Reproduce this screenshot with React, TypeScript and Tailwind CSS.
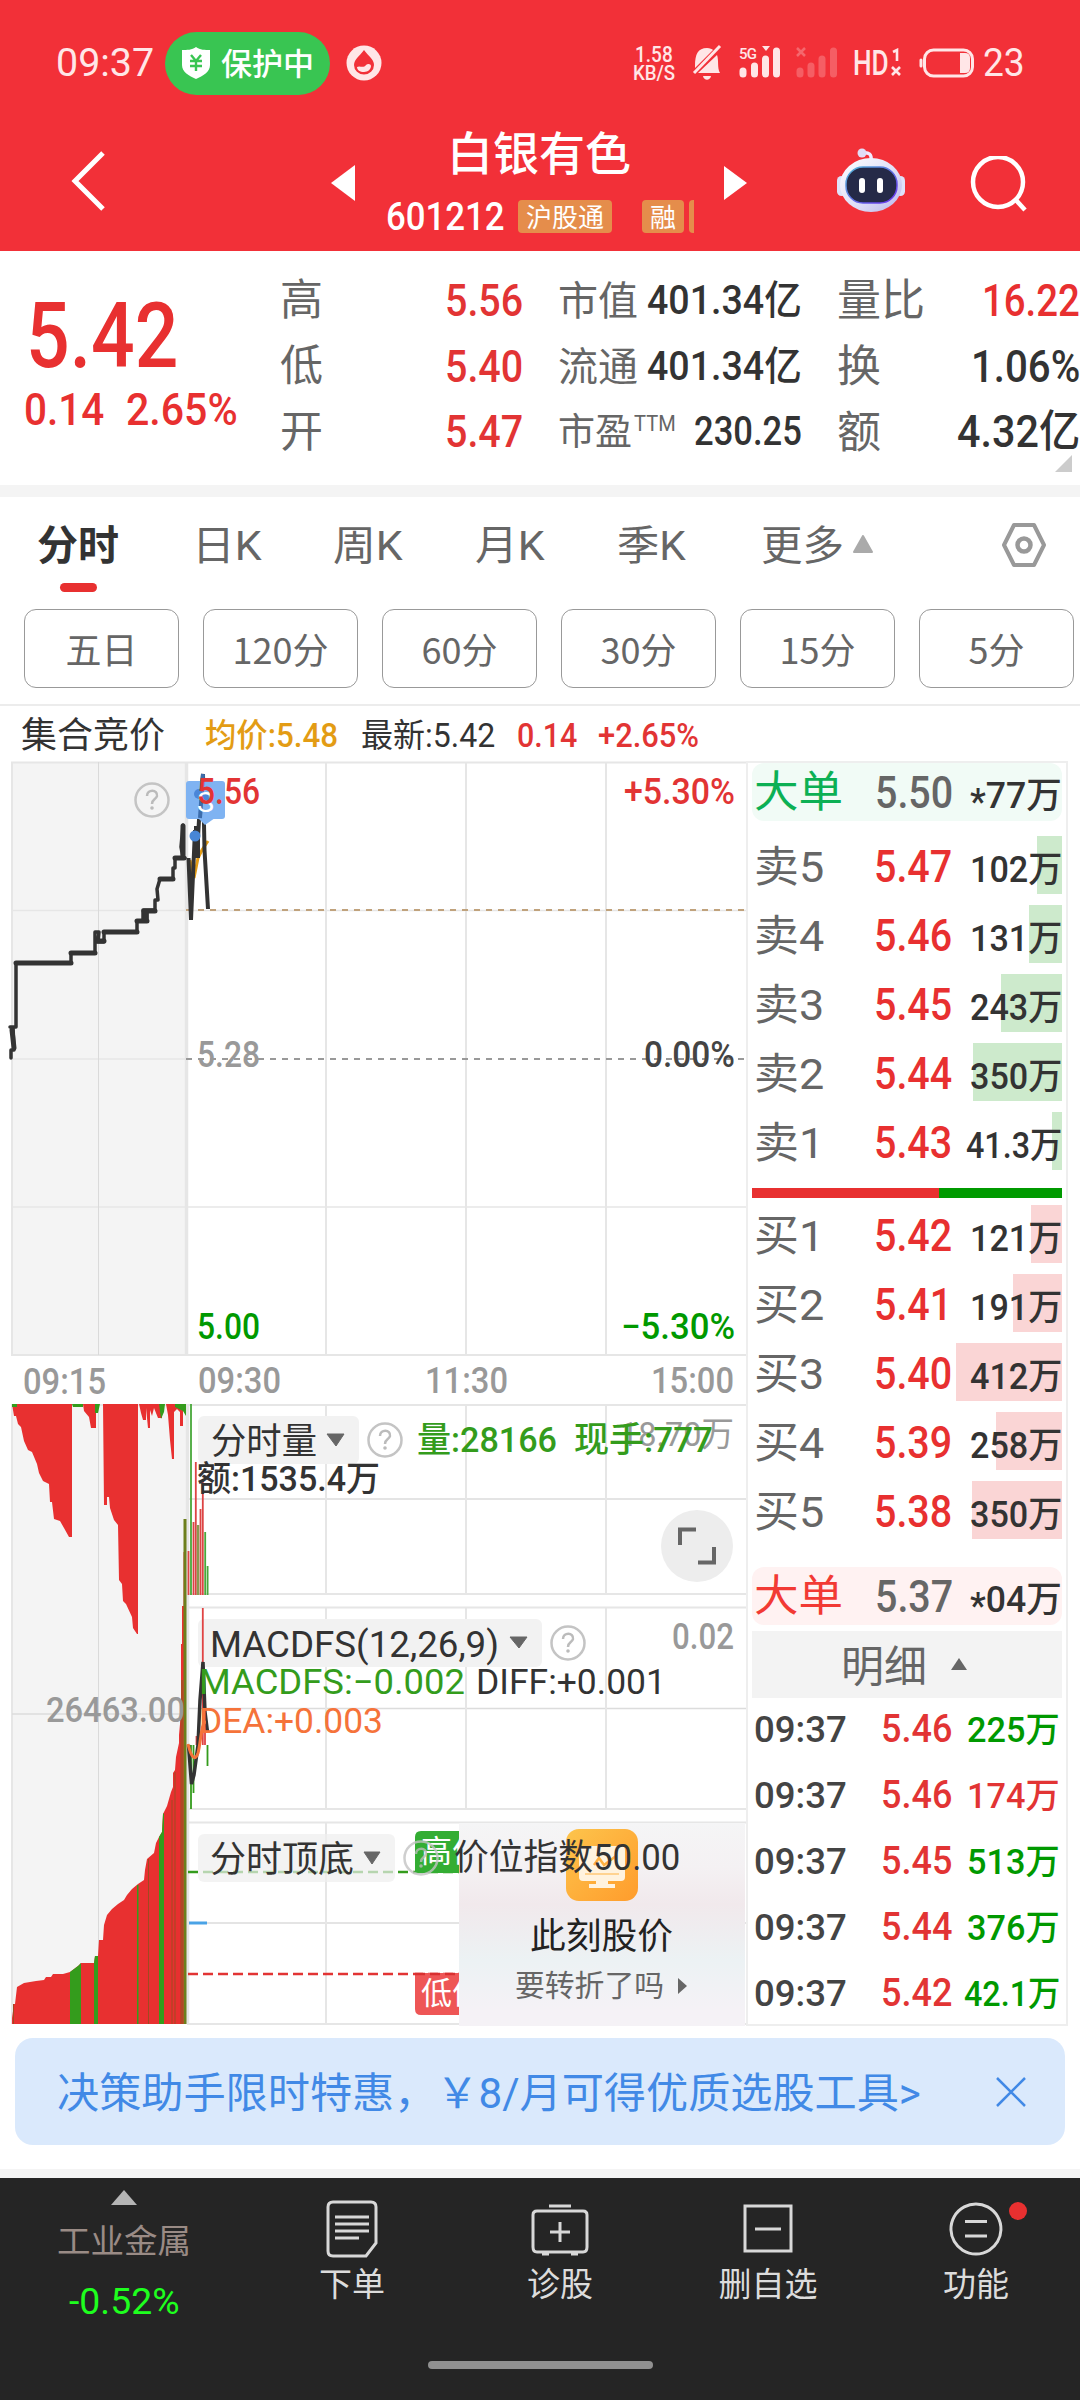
import { useLayoutEffect, useRef, type ReactNode } from "react";

// squeezes or stretches one line of text to the width of its box
function Fit({ className, children }: { className: string; children: ReactNode }) {
  const box = useRef<HTMLSpanElement>(null);
  const inner = useRef<HTMLSpanElement>(null);

  useLayoutEffect(() => {
    if (!box.current || !inner.current) return;
    inner.current.style.transform = `scaleX(${box.current.clientWidth / inner.current.offsetWidth})`;
  }, [children]);

  return (
    <span
      ref={box}
      className={`block shrink-0 whitespace-nowrap font-[family-name:Roboto,'Noto_Sans_CJK_SC',sans-serif] ${className}`}
    >
      <span ref={inner} className="inline-block origin-left">
        {children}
      </span>
    </span>
  );
}

function StatusBar() {
  return (
    <div className="flex h-[126px] items-center text-[#ffe6e7]">
      <Fit className="ml-[56px] w-[98px] pt-px text-[39px]">09:37</Fit>
      <div className="ml-[11px] flex h-[63px] w-[165px] items-center rounded-full bg-[#39c552] pl-4 text-white">
        <svg width="30" height="32" viewBox="0 0 30 32">
          <path d="M15 0 C19 3 24 3 29 3 V18 C29 25 22 29 15 32 C8 29 1 25 1 18 V3 C6 3 11 3 15 0Z" fill="#fff" />
          <path d="M10 8 L15 14 L20 8 M9 14 H21 M9 19 H21 M15 14 V24" stroke="#39c552" strokeWidth="2.4" fill="none" />
        </svg>
        <span className="ml-[10px] pb-1 text-[31px] leading-none font-medium">保护中</span>
      </div>
      <svg className="ml-4" width="36" height="36" viewBox="0 0 36 36">
        <circle cx="18" cy="18" r="17.5" fill="#ffe6e7" />
        <path d="M18 5 C22 11 28 14 28 20 A10 9.5 0 0 1 8 20 C8 14 14 11 18 5Z" fill="#f23038" />
        <path d="M11 22 C14 20 17 24 20 20 C22 18 25 19 25 21 C25 24 22 27 18 27 C14 27 11 25 11 22Z" fill="#ffe6e7" />
      </svg>

      <div className="ml-[251px] flex w-[44px] flex-col pt-px leading-[18px]">
        <Fit className="ml-[2px] w-[38px] text-[22px] font-medium">1.58</Fit>
        <Fit className="w-[42px] text-[20px] font-medium">KB/S</Fit>
      </div>
      <svg className="ml-[15px]" width="30" height="38" viewBox="0 0 30 38">
        <path d="M3 22 C3 10 6 4 15 4 C18 4 20 5 21 6 L3 24Z M25 11 C27 16 25 24 28 29 H6Z" fill="#ffe6e7" />
        <path d="M2 29 L28 2" stroke="#ffe6e7" strokeWidth="3" />
        <path d="M11 32 H19 C18 37 12 37 11 32Z" fill="#ffe6e7" />
      </svg>
      <svg className="ml-[17px]" width="100" height="34" viewBox="0 0 100 34">
        <text x="0" y="13" fontSize="15" fontWeight="500" fontFamily="Roboto, sans-serif" textLength="18" fill="#ffe6e7">5G</text>
        <path d="M23 0 H31 L27 5Z" fill="#ffe6e7" />
        <g stroke="#ffe6e7" strokeWidth="7" strokeLinecap="round">
          <path d="M4 25 V28 M15.500 20 V28 M26.500 13 V28 M37.500 5 V28" />
          <path d="M61 25 V28 M72 20 V28 M83 13 V28 M94.500 5 V28" opacity=".25" />
        </g>
        <path d="M58 2 L66 10 M66 2 L58 10" stroke="#ffe6e7" strokeWidth="2.500" opacity=".3" />
      </svg>
      <Fit className="ml-[14px] w-[36px] pt-[2px] text-[35px] font-medium">HD</Fit>
      <svg className="ml-[2px]" width="12" height="30" viewBox="0 0 12 30">
        <path d="M2 4 L6 2 V13 M1 19 L9 27 M9 19 L1 27" stroke="#ffe6e7" strokeWidth="2.600" fill="none" />
      </svg>
      <svg className="ml-[15px]" width="58" height="30" viewBox="0 0 58 30">
        <rect x="6.500" y="2" width="48" height="26" rx="9" fill="none" stroke="#ffe6e7" strokeWidth="3" />
        <path d="M42 5 H47 Q52 5 52 10 V20 Q52 25 47 25 H42Z" fill="#ffe6e7" />
        <path d="M3 12 V18" stroke="#ffe6e7" strokeWidth="3" strokeLinecap="round" />
      </svg>
      <Fit className="ml-[7px] w-[42px] pt-px text-[38px]">23</Fit>
    </div>
  );
}

function Robot() {
  return (
    <svg width="70" height="66" viewBox="0 0 70 66">
      <defs>
        <linearGradient id="shell" x1="0" y1="0" x2="1" y2="1">
          <stop offset="0" stopColor="#fff" />
          <stop offset=".6" stopColor="#dcdcf6" />
          <stop offset="1" stopColor="#b9b4ea" />
        </linearGradient>
        <linearGradient id="rim" x1="0" y1="0" x2="1" y2="1">
          <stop offset="0" stopColor="#56b8d8" />
          <stop offset="1" stopColor="#6a2df0" />
        </linearGradient>
      </defs>
      <path d="M26 5 C33 4 36 6 35 13" stroke="#f3eaff" strokeWidth="3.500" fill="none" />
      <circle cx="26" cy="5" r="4.500" fill="#e2dcf6" />
      <rect x="1" y="28" width="9" height="20" rx="4.500" fill="#dfe2fa" />
      <rect x="60" y="28" width="9" height="20" rx="4.500" fill="#dfe2fa" />
      <ellipse cx="35" cy="37" rx="31" ry="27" fill="url(#shell)" />
      <rect x="10" y="19" width="51" height="36" rx="17" fill="#252a48" stroke="url(#rim)" strokeWidth="1.500" />
      <rect x="23" y="30" width="6" height="15" rx="3" fill="#fff" />
      <rect x="41" y="30" width="6" height="15" rx="3" fill="#fff" />
    </svg>
  );
}

function Header() {
  return (
    <header className="h-[251px] bg-[#f23038] text-white">
      <StatusBar />
      <div className="flex h-[125px]">
        <svg className="mt-6 ml-[70px]" width="38" height="64" viewBox="0 0 38 64">
          <path d="M33 3 L5 31 L33 59" stroke="#fff" strokeWidth="5" fill="none" />
        </svg>
        <svg className="mt-[38px] ml-[223px]" width="24" height="38" viewBox="0 0 24 38">
          <path d="M0 19 L24 1 V37Z" fill="#fff" />
        </svg>
        <div className="ml-[31px] flex w-[310px] flex-col">
          <div className="ml-[61px] text-[46px] leading-[48px] font-medium">白银有色</div>
          <div className="mt-[26px] flex h-[33px] items-center">
            <Fit className="w-[119px] pt-[2px] text-[38px] leading-[33px] font-medium">601212</Fit>
            <span className="ml-[13px] h-[33px] w-[94px] rounded bg-[#e58d4b] text-center text-[26px] leading-[31px]">沪股通</span>
            <span className="ml-[30px] h-[33px] w-[42px] rounded bg-[#e58d4b] text-center text-[26px] leading-[31px]">融</span>
            <span className="ml-[5px] h-[33px] w-[5px] rounded-l bg-[#e58d4b]" />
          </div>
        </div>
        <svg className="mt-[39px] ml-[28px]" width="24" height="36" viewBox="0 0 24 36">
          <path d="M0 1 L23 18 L0 35Z" fill="#fff" />
        </svg>
        <div className="mt-[22px] ml-[88px]">
          <Robot />
        </div>
        <svg className="mt-[30px] ml-[63px]" width="60" height="60" viewBox="0 0 60 60">
          <circle cx="29" cy="26" r="25" stroke="#fff" strokeWidth="4.500" fill="none" />
          <path d="M46 43 L56 54" stroke="#fff" strokeWidth="4.500" />
        </svg>
      </div>
    </header>
  );
}

const rowCls = "flex h-[66px] items-center justify-between";

function Stats() {
  return (
    <section className="flex h-[234px] bg-white pt-4 text-[#666]">
      <div className="w-[280px] text-[#e83030]">
        <Fit className="mt-[22px] ml-[26px] w-[152px] text-[90px] leading-[96px] font-medium">5.42</Fit>
        <div className="mt-[1px] flex leading-[48px]">
          <Fit className="ml-[24px] w-[80px] text-[44px] font-medium">0.14</Fit>
          <Fit className="ml-[22px] w-[112px] text-[44px] font-medium">2.65%</Fit>
        </div>
      </div>
      <div className="w-[243px] text-[43px]">
        <div className={rowCls}>
          <span className="pb-[7px]">高</span>
          <Fit className="w-[78px] pt-px text-[45px] font-medium text-[#e23434]">5.56</Fit>
        </div>
        <div className={rowCls}>
          <span className="pb-[7px]">低</span>
          <Fit className="w-[78px] pt-px text-[45px] font-medium text-[#e23434]">5.40</Fit>
        </div>
        <div className={rowCls}>
          <span className="pb-[7px]">开</span>
          <Fit className="w-[78px] text-[45px] font-medium text-[#e23434]">5.47</Fit>
        </div>
      </div>
      <div className="ml-[35px] w-[244px] text-[40px]">
        <div className={rowCls}>
          <span className="pb-1">市值</span>
          <Fit className="w-[155px] pt-[2px] text-[40px] font-medium text-[#333]">401.34亿</Fit>
        </div>
        <div className={rowCls}>
          <span className="pb-1">流通</span>
          <Fit className="w-[155px] pt-[2px] text-[40px] font-medium text-[#333]">401.34亿</Fit>
        </div>
        <div className={rowCls}>
          <span className="flex pb-[5px] text-[37px]">
            市盈
            <Fit className="mt-[5px] ml-[2px] w-[42px] text-[22px]">TTM</Fit>
          </span>
          <Fit className="w-[108px] text-[40px] font-medium text-[#333]">230.25</Fit>
        </div>
      </div>
      <div className="relative ml-[35px] w-[243px] text-[44px]">
        <div className={rowCls}>
          <span className="pb-[6px]">量比</span>
          <Fit className="w-[98px] pt-px text-[45px] font-medium text-[#e83030]">16.22</Fit>
        </div>
        <div className={rowCls}>
          <span className="pb-[6px]">换</span>
          <Fit className="w-[109px] pt-[2px] text-[45px] font-medium text-[#333]">1.06%</Fit>
        </div>
        <div className={rowCls}>
          <span className="pb-[6px]">额</span>
          <Fit className="w-[123px] text-[44px] font-medium text-[#333]">4.32亿</Fit>
        </div>
        <svg className="absolute right-[8px] bottom-[13px]" width="17" height="17" viewBox="0 0 17 17">
          <path d="M17 0 V17 H0Z" fill="#ccc" />
        </svg>
      </div>
    </section>
  );
}

function Tabs() {
  return (
    <section className="h-[209px] border-b-2 border-[#ececec] bg-white text-[#666]">
      <div className="flex h-[112px] text-[41px] leading-[98px]">
        <div className="ml-[37px] w-[155px]">
          <div className="h-[86px] leading-[91px] font-bold text-[#333]">分时</div>
          <div className="ml-[23px] h-[9px] w-[37px] rounded-full bg-[#e83030]" />
        </div>
        <Fit className="w-[70px]">日K</Fit>
        <Fit className="ml-[71px] w-[70px]">周K</Fit>
        <Fit className="ml-[72px] w-[70px]">月K</Fit>
        <Fit className="ml-[72px] w-[69px]">季K</Fit>
        <Fit className="ml-[75px] w-[83px]">更多</Fit>
        <svg className="mt-[38px] ml-[8px]" width="22" height="19" viewBox="0 0 22 19">
          <path d="M11 1 L20 17 H2Z" fill="#aaa" stroke="#aaa" strokeWidth="2" strokeLinejoin="round" />
        </svg>
        <svg className="mt-[25px] ml-[127px]" width="46" height="46" viewBox="0 0 46 46">
          <path d="M13 3 H33 L43 23 L33 43 H13 L3 23Z" fill="none" stroke="#999" strokeWidth="4" strokeLinejoin="round" />
          <circle cx="23" cy="23" r="6.500" fill="none" stroke="#999" strokeWidth="4.500" />
        </svg>
      </div>
      <div className="ml-[24px] flex gap-6 text-[36px]">
        {["五日", "120分", "60分", "30分", "15分", "5分"].map((label) => (
          <div key={label} className="h-[79px] w-[155px] shrink-0 rounded-xl border border-[#999] text-center leading-[76px]">
            {label}
          </div>
        ))}
      </div>
    </section>
  );
}

function InfoRow() {
  return (
    <div className="flex h-[55px] items-center bg-white pt-[4px] text-[33px] font-medium text-[#333]">
      <Fit className="ml-[21px] w-[144px] text-[36px] font-normal">集合竞价</Fit>
      <Fit className="ml-[40px] w-[133px] text-[#e39c14]">均价:5.48</Fit>
      <Fit className="ml-[23px] w-[134px] font-normal">最新:5.42</Fit>
      <Fit className="ml-[22px] w-[60px] text-[#e23434]">0.14</Fit>
      <Fit className="ml-[21px] w-[101px] text-[#e23434]">+2.65%</Fit>
    </div>
  );
}

// chart label, x is the left edge and w the drawn width
function Label({ x, y, w, size = 36, fill, weight = 400, children }: {
  x: number; y: number; w: number; size?: number; fill: string; weight?: number; children: string;
}) {
  return (
    <text x={x} y={y} fontSize={size} fill={fill} fontWeight={weight} textLength={w} lengthAdjust="spacingAndGlyphs">
      {children}
    </text>
  );
}

function Help({ x, y }: { x: number; y: number }) {
  return (
    <g>
      <circle cx={x} cy={y} r="16.500" fill="none" stroke="#c4c4c4" strokeWidth="2.500" />
      <path
        d={`M${x - 5} ${y - 4} C${x - 5} ${y - 11} ${x + 6} ${y - 11} ${x + 5} ${y - 4} C${x + 4} ${y} ${x} ${y - 1} ${x} ${y + 4}`}
        fill="none" stroke="#bbb" strokeWidth="2.500"
      />
      <circle cx={x} cy={y + 8} r="1.800" fill="#bbb" />
    </g>
  );
}

const GREEN = "#349c1c";
const RED = "#e83030";

function Chart() {
  return (
    <svg width="746" height="1265" viewBox="0 761 746 1265" fontFamily="Roboto, 'Noto Sans CJK SC', sans-serif">
      {/* call auction pane */}
      <rect x="12" y="762" width="175" height="593" fill="#f4f4f4" />
      <rect x="12" y="1404" width="175" height="620" fill="#f4f4f4" />
      <g stroke="#e6e6e6" strokeWidth="2" fill="none">
        <path d="M11 762.500 H746 M11 1355 H746 M12 762 V1355 M12 1404 V2024 M11 1405 H746" />
        <path d="M12 910.500 H746 M12 1059 H187 M12 1207 H746" strokeWidth="1.500" />
        <path d="M326 762 V1355 M466 762 V1355 M606 762 V1355" />
        <path d="M187 1499 H746 M187 1708.500 H746 M187 1923 H746 M12 1714 H187" strokeWidth="1.500" stroke="#dcdcdc" />
        <path d="M187 1594 H746 M187 1607.500 H746 M187 1809 H746 M187 1822.500 H746 M187 2024 H746" />
        <path d="M326 1405 V1594 M466 1405 V1594 M606 1405 V1594 M326 1608 V1809 M466 1608 V1809 M606 1608 V1809 M326 1823 V2024" />
        <path d="M98.500 762 V1355 M98.500 1404 V2024" stroke="#dadada" strokeWidth="1" />
        <path d="M186.500 762 V1355 M187.500 1404 V2024" strokeWidth="3.500" />
      </g>
      <path d="M186 910 H746" stroke="#c0a27c" strokeWidth="2" strokeDasharray="6 6" />
      <path d="M186 1059 H746" stroke="#999" strokeWidth="2" strokeDasharray="6 6" />
      <Help x={152} y={800} />

      {/* prices */}
      <path
        d="M11 1058 V1050 H14 V1048 L13 1027 H10 H16 V963 H71 V953 H95 V932 H99 L98 942 H104 V932 H137 V921 H143 V910 H147 V921 V910 H155 V900 H158 L157 889 L160 879 H173 V868 H175 V858 H185 M183 858 L181 847 L183 825 V858"
        fill="none" stroke="#333" strokeWidth="3.500" strokeLinecap="round" strokeLinejoin="round"
      />
      <path
        d="M16 963 H71 M71 953 H95 M104 932 H137 M137 921 H147 M144 911 H155 M160 879 H173 M175 858 H184 M183 826 V856 M146 912 V920 M98 941 H104 M12 1030 L14 1048"
        fill="none" stroke="#333" strokeWidth="5" strokeLinecap="round"
      />
      <path d="M190 860 L194 878 L198 858 L202 850 L208 841" stroke="#e39c14" strokeWidth="3" fill="none" />
      <path d="M188.500 858 L191 920 L195 830 L197 856 L199 820 L203 774 L204.500 850 L208 909" stroke="#333" strokeWidth="4" fill="none" />
      <path d="M197 826 V858" stroke="#333" strokeWidth="6" />
      <rect x="186" y="781" width="39" height="38" rx="3" fill="#7fb3f2" />
      <path d="M198 818 L205 825 L215 818Z" fill="#7fb3f2" />
      <path d="M203 774 L200 818" stroke="#3c6cab" strokeWidth="4" />
      <circle cx="199" cy="794" r="5" fill="#4a86d8" />
      <circle cx="204" cy="798" r="5" fill="#4a86d8" />
      <circle cx="195" cy="836" r="5.500" fill="#4786d6" />
      <Label x={197} y={812} w={17} size={28} fill="#fff">S</Label>
      <Label x={197} y={804} w={63} fill="#e23434" weight={500}>5.56</Label>
      <Label x={624} y={804} w={111} fill="#e23434" weight={500}>+5.30%</Label>
      <Label x={197} y={1067} w={63} fill="#999" weight={500}>5.28</Label>
      <Label x={644} y={1067} w={91} fill="#444" weight={500}>0.00%</Label>
      <Label x={197} y={1339} w={63} fill="#090" weight={500}>5.00</Label>
      <Label x={621} y={1339} w={114} fill="#090" weight={500}>−5.30%</Label>
      <Label x={23} y={1394} w={83} fill="#999" weight={500}>09:15</Label>
      <Label x={198} y={1393} w={83} fill="#999" weight={500}>09:30</Label>
      <Label x={425} y={1393} w={83} fill="#999" weight={500}>11:30</Label>
      <Label x={651} y={1393} w={83} fill="#999" weight={500}>15:00</Label>

      {/* unmatched volume hanging from the top */}
      <g fill={RED}>
        <path d="M12 1404 L14 1416 L16 1416 L18 1424 L21 1427 L24 1441 L28 1450 L32 1452 L37 1464 L39 1473 L43 1481 L49 1484 L50 1502 L52 1502 L54 1519 L60 1521 L64 1528 L69 1537 H72 V1404Z" />
        <path d="M83 1404 L84 1411 L89 1417 L91 1428 H96 V1404Z" />
        <path d="M103 1404 L104 1505 H107 V1497 H109 L110 1508 L114 1520 L118 1525 L119 1580 L122 1584 L123 1601 L126 1604 L132 1617 L133 1628 L137 1634 H138 V1404Z" />
        <path d="M139 1404 L141 1413 L143 1420 H146 V1408 L148 1428 H150 V1410 L152 1416 L154 1408 L158 1418 H162 V1404Z" />
        <path d="M166 1404 L168 1415 L170 1440 L172 1459 H174 V1412 L177 1409 L180 1412 V1426 H183 V1404Z" />
      </g>
      <g fill={GREEN}>
        <path d="M72 1404 H83 V1407 H73Z M95 1404 H100 L98 1413 H95Z M159 1404 H165 L164 1412 L161 1419Z M175 1404 H186 V1416 L183 1411 L175 1407Z M12 1404 H17 V1407 H12Z" />
      </g>

      {/* matched volume rising from the bottom */}
      <path
        d="M12 2024 V2018 L14 2004 H15 L17 1987 L24 1983 L36 1981 L44 1980 L46 1977 H51 L53 1974 H63 L70 1972 L78 1966 L81 1963 L94 1963 L95 1956 H98 L99 1940 H103 L104 1925 L107 1915 L112 1909 L118 1904 L124 1900 L127 1895 L132 1889 L138 1884 L144 1880 L145 1870 L147 1859 L154 1853 L156 1843 L159 1837 L162 1832 L163 1814 L167 1806 L171 1792 L173 1787 V1773 L175 1770 L176 1757 L179 1743 V1735 L181 1713 V1644 H182 V1606 H183.500 V1552 H185 V1520 H186 V2024Z"
        fill={RED}
      />
      <path d="M70 1972 L78 1966 L81 1963 V2024 H70Z M94 1963 L95 1956 H98 V2024 H94Z M159 1837 L162 1832 L163 1814 L164 1813 V2024 H159Z M137 1885 H138.500 V2024 H137Z" fill={GREEN} />
      <path d="M13.500 2004 V2024 M148.500 1859 V2024 M172 1800 V2024 M175 1772 V2024 M181 1720 V2024" stroke="#a04a20" strokeWidth="1" />
      <path d="M182 1680 V2024" stroke="#b04826" strokeWidth="2" />
      <path d="M185 1519 V2024" stroke="#6d7f1c" strokeWidth="3" />
      <Label x={46} y={1722} w={139} size={35} fill="#999" weight={500}>26463.00</Label>

      {/* volume bars */}
      <g strokeWidth="1.800">
        <path d="M188.500 1551 V1595 M193.500 1522 V1595 M195.800 1462 V1595 M200.500 1509 V1595 M202.800 1480 V1595" stroke="#dd4444" />
        <path d="M191 1404 V1595 M205.200 1532 V1595 M207.600 1566 V1595" stroke="#48a83a" />
        <path d="M198 1525 V1595" stroke="#8a9a50" strokeWidth="2.500" />
      </g>
      <rect x="198" y="1416" width="161" height="48" rx="6" fill="#f2f2f2" />
      <Label x={211} y={1454} w={106} fill="#333">分时量</Label>
      <path d="M327 1434 H344 L336 1446Z" fill="#666" stroke="#666" strokeLinejoin="round" />
      <Help x={385} y={1440} />
      <Label x={620} y={1446} w={114} size={34} fill="#999">18.70万</Label>
      <Label x={417} y={1452} w={140} size={35} fill={GREEN} weight={500}>量:28166</Label>
      <Label x={574} y={1452} w={139} size={35} fill={GREEN} weight={500}>现手:777</Label>
      <Label x={197} y={1491} w={183} size={35} fill="#333" weight={500}>额:1535.4万</Label>
      <circle cx="697" cy="1546" r="36" fill="#ededed" />
      <path d="M680 1545 V1529.500 H696 M714 1547 V1562.500 H698" fill="none" stroke="#666" strokeWidth="4" />

      {/* MACD */}
      <rect x="198" y="1619" width="344" height="48" rx="6" fill="#f2f2f2" />
      <path d="M202.800 1608 V1745 M199 1737 V1745 M205 1700 V1745 M196.500 1736 V1745" stroke="#e04444" strokeWidth="1.800" />
      <path d="M191 1745 V1809 M193.500 1745 V1793 M207.500 1745 V1766" stroke={GREEN} strokeWidth="1.800" />
      <path d="M188.500 1745 L191.500 1784 L194 1775 L198 1745 L200 1700 L203 1662 L205 1712 L207.500 1732" fill="none" stroke="#333" strokeWidth="3.500" />
      <path d="M188 1744 C191 1757 195 1762 198 1753 C201 1742 201 1722 206 1722" fill="none" stroke="#f5733a" strokeWidth="3" />
      <Label x={210} y={1657} w={289} fill="#333">MACDFS(12,26,9)</Label>
      <path d="M510 1637 H527 L519 1648Z" fill="#666" stroke="#666" strokeLinejoin="round" />
      <Help x={568} y={1643} />
      <Label x={672} y={1649} w={62} fill="#999" weight={500}>0.02</Label>
      <Label x={199} y={1694} w={266} size={35} fill={GREEN}>MACDFS:−0.002</Label>
      <Label x={476} y={1694} w={190} size={35} fill="#333">DIFF:+0.001</Label>
      <Label x={199} y={1733} w={184} size={35} fill="#f5733a">DEA:+0.003</Label>

      {/* tops and bottoms */}
      <path d="M188 1872 H460" stroke={GREEN} strokeWidth="2.500" strokeDasharray="10 5" />
      <path d="M188 1974 H460" stroke="#e23434" strokeWidth="2.500" strokeDasharray="10 5" />
      <path d="M189 1923 H207" stroke="#4aa3e6" strokeWidth="3" />
      <rect x="198" y="1834" width="197" height="48" rx="6" fill="#eee" fillOpacity=".7" />
      <Label x={210} y={1872} w={144} fill="#333">分时顶底</Label>
      <path d="M364 1852 H380 L372 1864Z" fill="#666" stroke="#666" strokeLinejoin="round" />
      <path d="M421 1831 H470 V1873 H415 V1837 Q415 1831 421 1831Z" fill="#33ad33" />
      <path d="M415 1973 H470 V2015 H421 Q415 2015 415 2009Z" fill="#ee5656" />
      <path d="M415 1974 H460" stroke="#d93030" strokeWidth="2.500" strokeDasharray="10 5" />
      <Label x={421} y={1862} w={62} size={31} fill="#fff">高价</Label>
      <Label x={421} y={2004} w={62} size={31} fill="#fff">低价</Label>
      <g opacity=".8">
        <Help x={421} y={1858} />
      </g>
    </svg>
  );
}

function Promo() {
  return (
    <div className="absolute top-[1062px] left-[459px] flex h-[203px] w-[286px] flex-col items-center bg-[linear-gradient(180deg,#f5f5f6_0%,#f4f1f3_22%,#f1e9ec_40%,#ecf2f4_68%,#f5f2f6_92%)]">
      <svg className="mt-[6px]" width="72" height="72" viewBox="0 0 72 72">
        <defs>
          <linearGradient id="gold" x1="0" y1="0" x2="1" y2="1">
            <stop offset="0" stopColor="#fdc44c" />
            <stop offset="1" stopColor="#ff9c2c" />
          </linearGradient>
        </defs>
        <rect width="72" height="72" rx="13" fill="url(#gold)" />
        <rect x="13" y="17" width="46" height="35" rx="4" fill="#fff3df" />
        <path d="M28 36 L33 29 L38 36 L50 27" stroke="#ffb041" strokeWidth="2.500" fill="none" />
        <path d="M19 45 H53" stroke="#ffd391" strokeWidth="2" />
        <path d="M30 51 H42 V55 H49 V59 H23 V55 H30Z" fill="#fff3df" />
      </svg>
      <Fit className="mt-[15px] w-[143px] -translate-x-px text-[36px] leading-[42px] text-[#222]">此刻股价</Fit>
      <div className="mt-[9px] flex items-center">
        <Fit className="ml-[-2px] w-[149px] text-[30px] leading-[38px] text-[#666]">要转折了吗</Fit>
        <svg className="ml-[13px]" width="11" height="18" viewBox="0 0 11 18">
          <path d="M1 1 L10 9 L1 17Z" fill="#666" />
        </svg>
      </div>
      <Fit className="absolute top-[14px] left-[-5px] w-[226px] text-[36px] leading-[43px] text-[#333]">价位指数50.00</Fit>
    </div>
  );
}

const asks = [
  { name: "卖5", price: "5.47", vol: "102万", bar: 25 },
  { name: "卖4", price: "5.46", vol: "131万", bar: 33 },
  { name: "卖3", price: "5.45", vol: "243万", bar: 61 },
  { name: "卖2", price: "5.44", vol: "350万", bar: 89 },
  { name: "卖1", price: "5.43", vol: "41.3万", bar: 10 },
];

const bids = [
  { name: "买1", price: "5.42", vol: "121万", bar: 31 },
  { name: "买2", price: "5.41", vol: "191万", bar: 49 },
  { name: "买3", price: "5.40", vol: "412万", bar: 106 },
  { name: "买4", price: "5.39", vol: "258万", bar: 66 },
  { name: "买5", price: "5.38", vol: "350万", bar: 90 },
];

const trades = [
  { price: "5.46", vol: "225万", up: false },
  { price: "5.46", vol: "174万", up: true },
  { price: "5.45", vol: "513万", up: false },
  { price: "5.44", vol: "376万", up: false },
  { price: "5.42", vol: "42.1万", up: false },
];

function Quote({ name, price, vol, bar, barCls }: { name: string; price: string; vol: string; bar: number; barCls: string }) {
  return (
    <div className="relative flex h-[69px] items-center">
      <div className={`absolute top-[5px] right-0 h-[58px] ${barCls}`} style={{ width: bar }} />
      <Fit className="relative ml-[2px] w-[70px] pt-[3px] text-[43px] text-[#666]">{name}</Fit>
      <Fit className="relative ml-[50px] w-[78px] pt-[2px] text-[45px] font-medium text-[#e83030]">{price}</Fit>
      <Fit className={`relative mt-[9px] ml-auto text-[36px] font-medium text-[#333] ${vol.length > 4 ? "w-[96px]" : "w-[92px]"}`}>{vol}</Fit>
    </div>
  );
}

function BigOrder({ price, vol, cls }: { price: string; vol: string; cls: string }) {
  return (
    <div className={`flex h-[58px] items-center rounded-xl ${cls}`}>
      <Fit className="ml-[2px] w-[89px] text-[43px]">大单</Fit>
      <Fit className="ml-[32px] w-[78px] pt-[2px] text-[45px] font-medium text-[#666]">{price}</Fit>
      <Fit className="mt-[8px] ml-auto w-[92px] text-[36px] font-medium text-[#333]">
        <span className="relative top-[6px]">*</span>
        {vol}
      </Fit>
    </div>
  );
}

function OrderBook() {
  return (
    <div className="h-[1265px] w-[322px] border-2 border-[#eeeeee] bg-white pr-[4px] pl-[4px]">
      <BigOrder price="5.50" vol="77万" cls="bg-[#f1fbf6] text-[#0cb054]" />
      <div className="mt-[10px]">
        {asks.map((q) => (
          <Quote key={q.name} {...q} barCls="bg-[#cdeacc]" />
        ))}
      </div>
      <div className="mt-[12px] flex h-[10px]">
        <div className="w-[187px] bg-[#e83030]" />
        <div className="flex-1 bg-[#009a00]" />
      </div>
      <div className="mt-[2px]">
        {bids.map((q) => (
          <Quote key={q.name} {...q} barCls="bg-[#fad5d5]" />
        ))}
      </div>
      <div className="mt-[22px]">
        <BigOrder price="5.37" vol="04万" cls="bg-[#fff2f2] text-[#f23a34]" />
      </div>
      <div className="mt-[6px] flex h-[67px] items-center bg-[#f3f3f3] text-[43px] text-[#666]">
        <span className="ml-[89px] pb-[2px]">明细</span>
        <svg className="ml-[23px]" width="18" height="13" viewBox="0 0 18 13">
          <path d="M9 0 L17 12 H1Z" fill="#666" />
        </svg>
      </div>
      {trades.map((t, i) => (
        <div key={i} className="flex h-[66px] items-center pb-[3px]">
          <Fit className="ml-[2px] w-[93px] text-[37px] font-medium text-[#444]">09:37</Fit>
          <Fit className="ml-[34px] w-[71px] text-[38px] font-medium text-[#e23434]">{t.price}</Fit>
          <Fit
            className={`mt-[3px] mr-[2px] ml-auto text-[35px] font-medium ${t.vol.length > 4 ? "w-[96px]" : "w-[93px]"} ${t.up ? "text-[#e23434]" : "text-[#090]"}`}
          >
            {t.vol}
          </Fit>
        </div>
      ))}
    </div>
  );
}

function BottomNav() {
  const items = [
    {
      label: "下单",
      icon: <path d="M11 3 H49 Q54 3 54 8 V44 L44 57 H11 Q6 57 6 52 V8 Q6 3 11 3Z M13 18 H47 M13 25 H47 M13 32 H47 M13 39 H37" />,
    },
    {
      label: "诊股",
      icon: <path d="M7 12 H53 Q57 12 57 16 V48 Q57 53 53 53 H7 Q3 53 3 48 V16 Q3 12 7 12Z M19 7 H41 M30 23 V43 M20 33 H40 M12 55 H19 M41 55 H48" />,
    },
    { label: "删自选", icon: <path d="M7 7 H53 V52 H7Z M17 30 H43" /> },
    { label: "功能", icon: <path d="M30 5 A25 25 0 1 1 29.900 5Z M19 22.500 H41 M19 37 H41" /> },
  ];

  return (
    <nav className="flex h-[222px] flex-col bg-[#252525] text-[33px] text-[#dcdcdc]">
      <div className="flex h-[183px]">
        <div className="flex w-[248px] flex-col items-center">
          <svg className="mt-[12px]" width="28" height="15" viewBox="0 0 28 15">
            <path d="M14 0 L27 15 H1Z" fill="#b5b5b5" />
          </svg>
          <span className="mt-[12px] text-[33.500px] leading-[44px] text-[#9a8b85]">工业金属</span>
          <Fit className="mt-[20px] w-[111px] text-[36px] leading-[42px] text-[#1eff1e]">-0.52%</Fit>
        </div>
        {items.map((item) => (
          <div key={item.label} className="relative flex w-[208px] flex-col items-center">
            <svg className="mt-[21px]" width="60" height="60" viewBox="0 0 60 60" fill="none" stroke="#d8d8d8" strokeWidth="3">
              {item.icon}
            </svg>
            <span className="mt-[1px] leading-[44px]">{item.label}</span>
            {item.label === "功能" && <span className="absolute top-[24px] left-[137px] size-[18px] rounded-full bg-[#e83030]" />}
          </div>
        ))}
      </div>
      <div className="mx-auto h-[8px] w-[225px] rounded-full bg-[#919191]" />
    </nav>
  );
}

export default function App() {
  return (
    <div className="h-[2400px] w-[1080px] overflow-hidden bg-white font-[family-name:'Noto_Sans_CJK_SC',sans-serif]">
      <Header />
      <Stats />
      <div className="h-[12px] bg-[#f4f4f4]" />
      <Tabs />
      <InfoRow />
      <main className="relative flex">
        <Chart />
        <OrderBook />
        <Promo />
      </main>
      <div className="mx-[15px] mt-[12px] flex h-[107px] items-center rounded-[18px] bg-[#dae9fc] text-[#4189e6]">
        <Fit className="ml-[42px] w-[864px] pt-[4px] text-[42px]">决策助手限时特惠，￥8/月可得优质选股工具&gt;</Fit>
        <svg className="ml-[74px]" width="32" height="32" viewBox="0 0 32 32">
          <path d="M2 2 L30 30 M30 2 L2 30" stroke="#4189e6" strokeWidth="2.500" />
        </svg>
      </div>
      <div className="mt-[24px] h-[9px] bg-[#f4f4f4]" />
      <BottomNav />
    </div>
  );
}
